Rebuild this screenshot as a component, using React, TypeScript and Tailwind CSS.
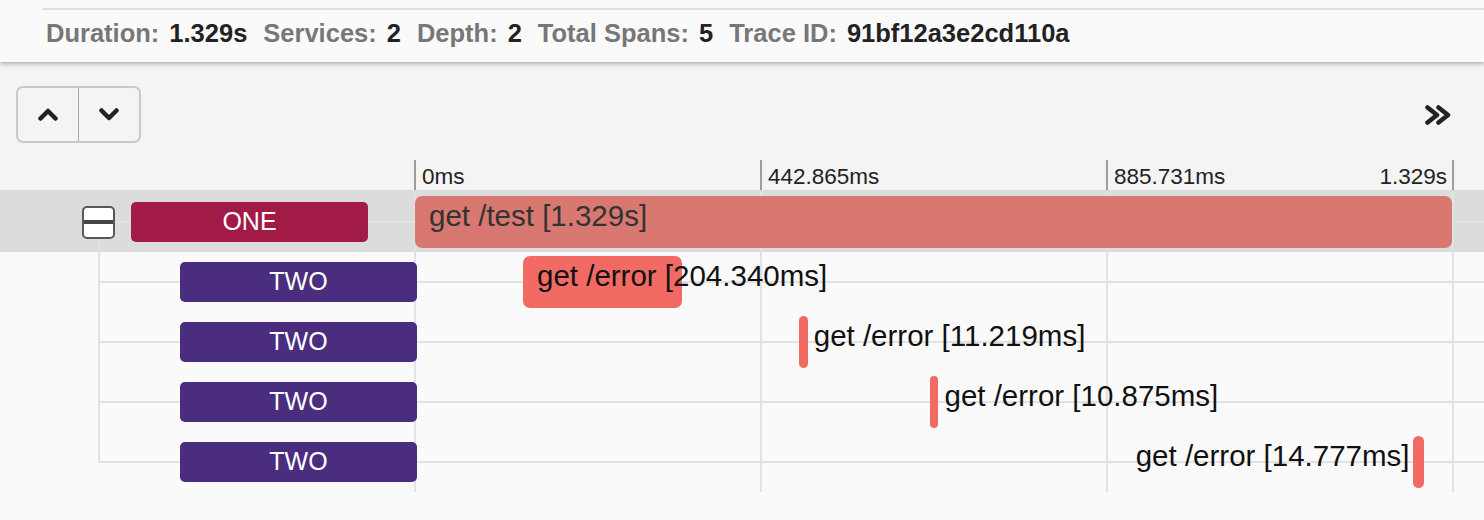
import React from "react";

type Span = {
    service: string;
    name: string;
    start: number;
    duration: number;
    depth: number;
    label: "inside" | "right" | "left";
};

const TOTAL = 1329;
// pixels the whole trace takes up inside the timeline
const SCALE = 1037;

const spans: Span[] = [
    { service: "ONE", name: "get /test", start: 0, duration: 1329, depth: 0, label: "inside" },
    { service: "TWO", name: "get /error", start: 138.4, duration: 204.34, depth: 1, label: "inside" },
    { service: "TWO", name: "get /error", start: 492.1, duration: 11.219, depth: 1, label: "right" },
    { service: "TWO", name: "get /error", start: 660, duration: 10.875, depth: 1, label: "right" },
    { service: "TWO", name: "get /error", start: 1278.4, duration: 14.777, depth: 1, label: "left" },
];

const serviceColor: Record<string, string> = {
    ONE: "bg-[#a21b47]",
    TWO: "bg-[#4a2d7e]",
};

const indent = ["pl-[82px]", "pl-[131px]"];

const fmt = (ms: number) =>
    ms >= 1000 ? `${(ms / 1000).toFixed(3)}s` : `${ms.toFixed(3)}ms`;

const stats = [
    ["Duration:", "1.329s"],
    ["Services:", "2"],
    ["Depth:", "2"],
    ["Total Spans:", "5"],
    ["Trace ID:", "91bf12a3e2cd110a"],
];

function ChevronUp() {
    return (
        <svg width="20" height="13" viewBox="0 0 20 13" fill="none">
            <polyline
                points="2.5,10.5 10,3 17.5,10.5"
                stroke="#222"
                strokeWidth="4.5"
                strokeLinecap="round"
                strokeLinejoin="round"
            />
        </svg>
    );
}

function ChevronDown() {
    return (
        <svg width="20" height="13" viewBox="0 0 20 13" fill="none">
            <polyline
                points="2.5,2.5 10,10 17.5,2.5"
                stroke="#222"
                strokeWidth="4.5"
                strokeLinecap="round"
                strokeLinejoin="round"
            />
        </svg>
    );
}

function DoubleChevronRight() {
    return (
        <svg width="26" height="20" viewBox="0 0 26 20" fill="none">
            <polyline
                points="2.5,2.5 12,10 2.5,17.5"
                stroke="#222"
                strokeWidth="4.5"
                strokeLinecap="round"
                strokeLinejoin="round"
            />
            <polyline
                points="13.5,2.5 23,10 13.5,17.5"
                stroke="#222"
                strokeWidth="4.5"
                strokeLinecap="round"
                strokeLinejoin="round"
            />
        </svg>
    );
}

function Bar({ span, root }: { span: Span; root: boolean }) {
    const left = 1 + (span.start / TOTAL) * SCALE;
    const width = (span.duration / TOTAL) * SCALE;
    const text = `${span.name} [${fmt(span.duration)}]`;
    const color = root ? "bg-[#d87871] text-[#333]" : "bg-[#f26a64] text-[#111]";
    const radius = width < 20 ? "rounded-full" : "rounded-[7px]";

    if (span.label === "left") {
        return (
            <>
                <div className="flex shrink-0 justify-end" style={{ width: left }}>
                    <span className="mb-[11px] mr-[3px] whitespace-nowrap text-[#111]">{text}</span>
                </div>
                <div className={`h-[52px] shrink-0 ${radius} ${color}`} style={{ width }} />
            </>
        );
    }

    if (span.label === "right") {
        return (
            <>
                <div
                    className={`h-[52px] shrink-0 ${radius} ${color}`}
                    style={{ marginLeft: left, width }}
                />
                <span className="mb-[11px] ml-[6px] whitespace-nowrap text-[#111]">{text}</span>
            </>
        );
    }

    return (
        <div
            className={`flex h-[52px] shrink-0 items-center pl-[14px] ${radius} ${color}`}
            style={{ marginLeft: left, width }}
        >
            <span className="mb-[11px] whitespace-nowrap">{text}</span>
        </div>
    );
}

function SpanRow({ span, index, last }: { span: Span; index: number; last: boolean }) {
    const root = index === 0;
    let tree = "bg-[length:2px_100%] bg-[position:98px_0]";
    if (root) tree = "h-[62px] pt-[2px] bg-[#dcdcdc] bg-[length:2px_14px] bg-[position:98px_100%]";
    else if (last) tree = "bg-[length:2px_31px] bg-[position:98px_0]";

    return (
        <div
            className={`h-[60px] bg-[linear-gradient(#e2e2e2,#e2e2e2)] bg-no-repeat ${tree}`}
        >
            <div className="flex h-full items-center bg-[linear-gradient(#e2e2e2,#e2e2e2)] bg-[length:calc(100%_-_98px)_2px] bg-right bg-no-repeat">
                <div className={`flex h-full w-[414px] shrink-0 items-center gap-[16px] ${indent[span.depth]}`}>
                    {root ? (
                        <div className="flex h-[33px] w-[33px] shrink-0 items-center overflow-hidden rounded-[5px] border-2 border-[#585858] bg-white">
                            <div className="h-[4px] w-full bg-[#444]" />
                        </div>
                    ) : (
                        <div className="w-[33px] shrink-0" />
                    )}
                    <div
                        className={`relative z-10 flex h-[40px] w-[237px] shrink-0 items-center justify-center rounded-[5px] text-[25px] text-white ${serviceColor[span.service]}`}
                    >
                        {span.service}
                    </div>
                </div>
                <div className="flex h-full w-[1040px] shrink-0 items-center bg-[linear-gradient(to_right,#e2e2e2_2px,transparent_2px)] bg-[length:346px_100%] bg-repeat-x text-[29.5px]">
                    <Bar span={span} root={root} />
                </div>
            </div>
        </div>
    );
}

export default function App() {
    return (
        <div className="flex min-h-screen flex-col bg-[#fafafa] font-['Liberation_Sans',Arial,sans-serif]">
            <header className="relative z-20 h-[62px] bg-[#fafafa] pt-[8px] shadow-[0_2px_4px_rgba(0,0,0,0.28)]">
                <div className="ml-[42px] h-[2px] bg-[#e0e0e0]" />
                <div className="mt-[9px] flex gap-[16px] pl-[46px] text-[25.5px] font-bold leading-[29px]">
                    {stats.map(([label, value]) => (
                        <div key={label} className="flex gap-[10px]">
                            <span className="text-[#777]">{label}</span>
                            <span className="text-[#222]">{value}</span>
                        </div>
                    ))}
                </div>
            </header>

            <div className="flex items-center justify-between bg-[#f4f4f4] pb-[17px] pl-[16px] pr-[33px] pt-[24px]">
                <div className="flex h-[57px] w-[125px] rounded-[7px] border-2 border-[#c9c9c9]">
                    <button className="flex w-[60px] items-center justify-center">
                        <ChevronUp />
                    </button>
                    <button className="flex flex-1 items-center justify-center border-l border-[#a8a8a8]">
                        <ChevronDown />
                    </button>
                </div>
                <DoubleChevronRight />
            </div>

            <div className="flex h-[30px] bg-[#f4f4f4] text-[22.5px] leading-[22px] text-[#222]">
                <div className="w-[414px] shrink-0" />
                <div className="flex w-[1040px] shrink-0 bg-[linear-gradient(to_right,#9e9e9e_2px,transparent_2px)] bg-[length:346px_100%] bg-repeat-x pt-[6px]">
                    <div className="w-[346px] pl-[8px]">0ms</div>
                    <div className="w-[346px] pl-[8px]">442.865ms</div>
                    <div className="flex w-[346px] justify-between pl-[8px] pr-[5px]">
                        <span>885.731ms</span>
                        <span>1.329s</span>
                    </div>
                </div>
            </div>

            <div className="flex flex-col">
                {spans.map((span, i) => (
                    <SpanRow key={i} span={span} index={i} last={i === spans.length - 1} />
                ))}
            </div>
        </div>
    );
}
